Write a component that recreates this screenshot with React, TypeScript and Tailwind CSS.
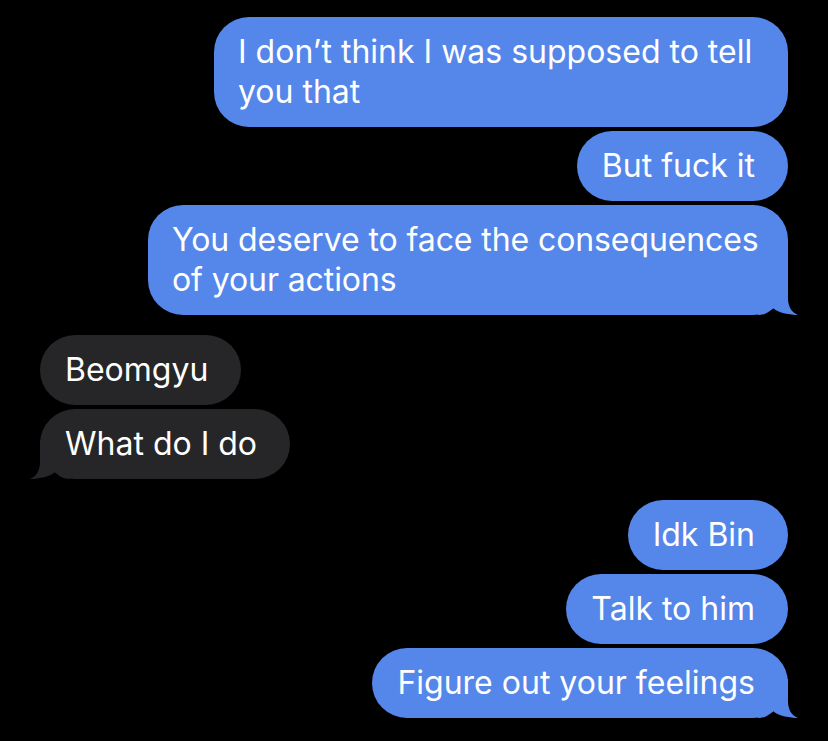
import React from "react";

interface BubbleProps {
	text: string;
	from: "me" | "them";
	tail?: boolean;
	// extra classes for the wrapped (two-line) bubbles
	extra?: string;
}

const Tail: React.FC<{ side: "left" | "right"; color: string }> = ({ side, color }) => (
	<svg
		width="40"
		height="40"
		viewBox="0 0 40 40"
		className={
			side === "right"
				? "absolute right-[-10px] bottom-[-1px]"
				: "absolute left-[-10px] bottom-[-1px] -scale-x-100"
		}
	>
		<path
			d="M0 39 L0 0 L30 0 L30 22 C30 30 33 36 40 39 C33 39 20 37 15 32 C12 35 8 39 0 39 Z"
			fill={color}
		/>
	</svg>
);

const Bubble: React.FC<BubbleProps> = ({ text, from, tail, extra }) => {
	const isMe = from === "me";
	const color = isMe ? "#5586ea" : "#262628";

	return (
		<div className={`flex ${isMe ? "justify-end" : "justify-start"}`}>
			<div
				className={`relative rounded-[35px] py-[15px] text-[32px] leading-[40px] text-white ${
					isMe ? "bg-[#5586ea]" : "bg-[#262628]"
				} ${extra ?? "pl-[25px] pr-[33px]"}`}
			>
				{tail && <Tail side={isMe ? "right" : "left"} color={color} />}
				<span className="relative">{text}</span>
			</div>
		</div>
	);
};

export default function App() {
	return (
		<div className="min-h-[741px] w-[828px] bg-black px-[40px] pt-[17px] font-['Inter',sans-serif]">
			{/* OUTGOING ************************************************ */}
			<div className="flex flex-col gap-[4px]">
				<Bubble
					from="me"
					text="I don’t think I was supposed to tell you that"
					extra="w-[574px] pl-[24px] pr-[30px]"
				/>
				<Bubble from="me" text="But fuck it" />
				<Bubble
					from="me"
					text="You deserve to face the consequences of your actions"
					extra="w-[640px] pl-[24px] pr-[22px] tracking-[-0.1px]"
					tail
				/>
			</div>

			{/* INCOMING ************************************************ */}
			<div className="mt-[20px] flex flex-col gap-[4px]">
				<Bubble from="them" text="Beomgyu" />
				<Bubble from="them" text="What do I do" tail />
			</div>

			{/* OUTGOING ************************************************ */}
			<div className="mt-[21px] flex flex-col gap-[4px]">
				<Bubble from="me" text="Idk Bin" />
				<Bubble from="me" text="Talk to him" />
				<Bubble from="me" text="Figure out your feelings" tail />
			</div>
		</div>
	);
}
